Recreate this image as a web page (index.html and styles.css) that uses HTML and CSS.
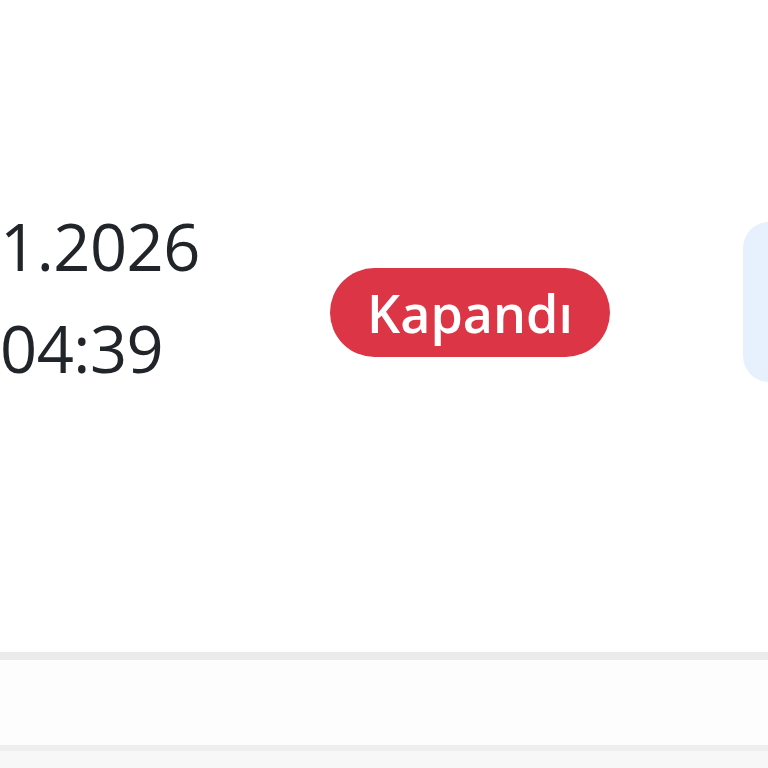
FILE: index.html
```html
<!DOCTYPE html>
<html lang="tr">
<head>
<meta charset="utf-8">
<link rel="stylesheet" href="styles.css">
<title>Kayıt</title>
</head>
<body>
<div class="table">
  <div class="row main">
    <div class="cell date">
      <div>1.2026</div>
      <div>04:39</div>
    </div>
    <div class="cell status">
      <span class="badge">Kapandı</span>
    </div>
    <div class="cell action">
      <span class="btn-soft"></span>
    </div>
  </div>
  <div class="row next"></div>
  <div class="row rest"></div>
</div>
</body>
</html>
```
FILE: styles.css
```css
html, body {
  margin: 0;
  padding: 0;
  background: #ffffff;
  overflow: hidden;
}
.table {
  width: 768px;
  height: 768px;
  overflow: hidden;
  font-family: "Open Sans", "Noto Sans", sans-serif;
  color: #212529;
}
.row {
  display: flex;
  align-items: center;
}
.main {
  box-sizing: border-box;
  height: 660px;
  padding-bottom: 48px;
  border-bottom: 8px solid #ebebeb;
}
.next {
  height: 85px;
  background: #fdfdfd;
  border-bottom: 6px solid #eeeeee;
}
.rest {
  height: 40px;
  background: #f7f7f7;
}
.cell.date {
  flex: 0 0 auto;
  width: 330px;
  font-size: 65px;
  line-height: 102px;
  font-weight: 400;
  letter-spacing: -0.5px;
  margin-top: -10px;
}
.cell.status {
  flex: 0 0 auto;
  width: 413px;
  display: flex;
  align-items: center;
  margin-top: 20px;
}
.badge {
  display: inline-flex;
  align-items: center;
  justify-content: center;
  height: 89px;
  width: 280px;
  border-radius: 45px;
  background: #dc3545;
  color: #ffffff;
  font-size: 52px;
  font-weight: 600;
}
.cell.action {
  flex: 0 0 auto;
}
.btn-soft {
  display: block;
  width: 140px;
  height: 160px;
  border-radius: 26px;
  background: #e7f1fd;
}
```
